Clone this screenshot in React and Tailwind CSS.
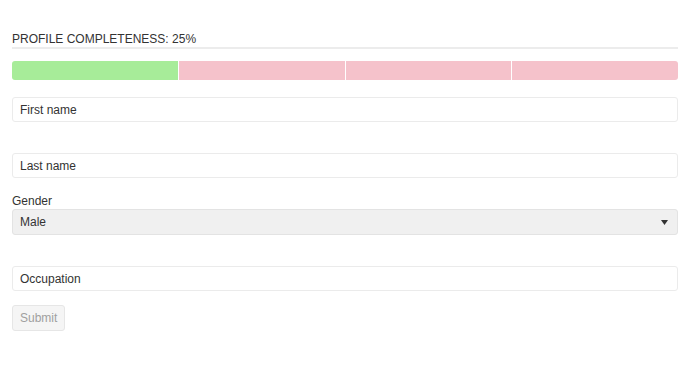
import React from 'react';

const fields = ['First name', 'Last name'];

function TextInput({ value }) {
  return (
    <div className="h-[25px] rounded-[3px] border border-[#ebebeb] bg-white px-[7px] flex items-center text-[12px] text-[#333]">
      {value}
    </div>
  );
}

export default function App() {
  const segments = [true, false, false, false];

  return (
    <div className="w-[690px] h-[391px] bg-white px-3 pt-[32px] font-['Liberation_Sans',Arial,sans-serif]">
      {/* Heading */}
      <div className="pb-[1px] border-b-2 border-[#ececec] text-[12px] leading-[14px] text-[#333]">
        PROFILE COMPLETENESS: 25%
      </div>

      {/* Progress bar */}
      <div className="mt-[12px] flex h-[19px] gap-px rounded-[3px] overflow-hidden">
        {segments.map((done, i) => (
          <div key={i} className={`flex-1 ${done ? 'bg-[#a7ec99]' : 'bg-[#f5c2cb]'}`} />
        ))}
      </div>

      <div className="mt-[17px]">
        <TextInput value={fields[0]} />
      </div>
      <div className="mt-[31px]">
        <TextInput value={fields[1]} />
      </div>

      {/* Gender */}
      <div className="mt-[16px] text-[12px] leading-[14px] text-[#333]">Gender</div>
      <div className="mt-[1px] h-[26px] rounded-[3px] border border-[#e3e3e3] bg-[#f0f0f0] px-[7px] flex items-center justify-between text-[12px] text-[#333]">
        <span>Male</span>
        <svg width="7" height="5" viewBox="0 0 7 5" className="mr-[2px]">
          <path d="M0 0 L7 0 L3.5 5 Z" fill="#333" />
        </svg>
      </div>

      <div className="mt-[31px]">
        <TextInput value="Occupation" />
      </div>

      <button className="mt-[14px] h-[26px] px-[7px] rounded-[3px] border border-[#e6e6e6] bg-[#f5f5f5] text-[12px] text-[#a0a0a0]">
        Submit
      </button>
    </div>
  );
}
